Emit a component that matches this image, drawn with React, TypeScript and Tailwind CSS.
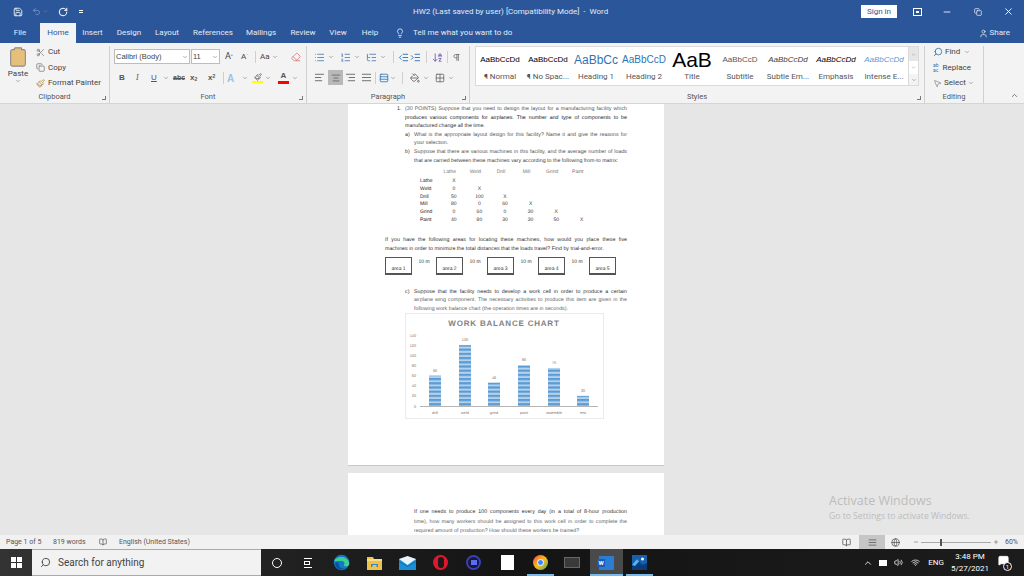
import {
  AlignCenter, AlignJustify, AlignLeft, AlignRight, ArrowDownAZ, BookOpen, ChevronDown, ChevronUp, Clipboard, Copy,
  Eraser, Globe, IndentDecrease, IndentIncrease, Lightbulb, List, ListOrdered, ListTree, Minus, MousePointer2,
  PaintBucket, Paintbrush, Pilcrow, Plus, RotateCw, Save, Scissors, Search, User, Volume2, Wifi, X, Grid2x2,
  MessageSquare, Undo2, Rows3,
} from 'lucide-react'
import type { ReactNode } from 'react'

const UI = { fontFamily: 'Roboto, "Open Sans", sans-serif' }
const DOC = { fontFamily: '"Liberation Sans", Arial, sans-serif' }

const TABS = [
  { label: 'File', w: 'w-[40px]' },
  { label: 'Home', w: 'w-[36px]', active: true },
  { label: 'Insert', w: 'w-[33px]' },
  { label: 'Design', w: 'w-[40px]' },
  { label: 'Layout', w: 'w-[36px]' },
  { label: 'References', w: 'w-[56px]' },
  { label: 'Mailings', w: 'w-[40px]' },
  { label: 'Review', w: 'w-[44px]' },
  { label: 'View', w: 'w-[26px]' },
  { label: 'Help', w: 'w-[38px]' },
]

const STYLES = [
  { sample: 'AaBbCcDd', label: '¶ Normal', cls: 'text-[8px] text-black' },
  { sample: 'AaBbCcDd', label: '¶ No Spac...', cls: 'text-[8px] text-black' },
  { sample: 'AaBbCc', label: 'Heading 1', cls: 'text-[12px] text-[#2e74b5]' },
  { sample: 'AaBbCcD', label: 'Heading 2', cls: 'text-[10px] text-[#2e74b5]' },
  { sample: 'AaB', label: 'Title', cls: 'text-[21px] text-black' },
  { sample: 'AaBbCcD', label: 'Subtitle', cls: 'text-[8px] text-[#595959]' },
  { sample: 'AaBbCcDd', label: 'Subtle Em...', cls: 'text-[8px] italic text-[#404040]' },
  { sample: 'AaBbCcDd', label: 'Emphasis', cls: 'text-[8px] italic text-black' },
  { sample: 'AaBbCcDd', label: 'Intense E...', cls: 'text-[8px] italic text-[#5b9bd5]' },
]

const MATRIX = [
  { name: 'Lathe', vals: ['X', '', '', '', '', ''] },
  { name: 'Weld', vals: ['0', 'X', '', '', '', ''] },
  { name: 'Drill', vals: ['50', '100', 'X', '', '', ''] },
  { name: 'Mill', vals: ['80', '0', '60', 'X', '', ''] },
  { name: 'Grind', vals: ['0', '60', '0', '30', 'X', ''] },
  { name: 'Paint', vals: ['40', '80', '30', '30', '50', 'X'] },
]

const BARS = [
  { label: 'drill', v: 60, x: 429 },
  { label: 'weld', v: 120, x: 459 },
  { label: 'grind', v: 46, x: 488 },
  { label: 'paint', v: 80, x: 518 },
  { label: 'assemble', v: 75, x: 548 },
  { label: 'test', v: 20, x: 577 },
]

function GroupLabel({ children }: { children: ReactNode }) {
  return (
    <div className="relative h-[11px] text-center text-[7.5px] leading-[10px] text-[#555]">
      {children}
    </div>
  )
}

function Launcher() {
  return <span className="absolute right-[3px] bottom-[3px] h-[4px] w-[4px] border-b border-r border-[#777]" />
}

function Group({ width, label, launcher, children }: { width: string; label: string; launcher?: boolean; children: ReactNode }) {
  return (
    <div className={`relative flex h-full shrink-0 flex-col border-r border-[#d0d0d0] ${width}`}>
      <div className="min-h-0 flex-1">{children}</div>
      <GroupLabel>{label}</GroupLabel>
      {launcher && <Launcher />}
    </div>
  )
}

function Caret() {
  return <ChevronDown size={6} strokeWidth={2} className="shrink-0 text-[#666]" />
}

function Chart() {
  const y = (v: number) => 406 - (v * 71) / 140
  return (
    <svg width="200" height="106" viewBox="405 313 200 106" className="ml-[57px] block" style={DOC}>
      <defs>
        <pattern id="bar" width="4" height="4.2" patternUnits="userSpaceOnUse">
          <rect width="4" height="4.2" fill="#b5d2ec" />
          <rect width="4" height="2.2" fill="#5b9bd5" />
        </pattern>
      </defs>
      <rect x="405.5" y="313.5" width="198" height="105" fill="#fff" stroke="#eaeaea" />
      <text x="504" y="326" textAnchor="middle" fontSize="8" fontWeight="700" letterSpacing="0.8" fill="#7f7f7f">WORK BALANCE CHART</text>
      {[0, 20, 40, 60, 80, 100, 120, 140].map((v) => (
        <text key={v} x="416" y={y(v) + 1.5} textAnchor="end" fontSize="3.8" fill="#777">{v}</text>
      ))}
      <line x1="420" x2="598" y1="406.5" y2="406.5" stroke="#b5b5b5" />
      {BARS.map((b) => (
        <g key={b.label}>
          <rect x={b.x} y={y(b.v)} width="12" height={406 - y(b.v)} fill="url(#bar)" />
          <text x={b.x + 6} y={y(b.v) - 4} textAnchor="middle" fontSize="3.8" fill="#777">{b.v}</text>
          <text x={b.x + 6} y="413.5" textAnchor="middle" fontSize="3.8" fill="#777">{b.label}</text>
        </g>
      ))}
    </svg>
  )
}

function AreaBox({ label }: { label: string }) {
  return (
    <div className="flex h-[18px] w-[27px] shrink-0 items-end justify-center border border-b-2 border-[#555] text-[5px] leading-[7px] text-[#333]">
      {label}
    </div>
  )
}

function Distance() {
  return <div className="flex h-[18px] w-[24px] shrink-0 justify-center pt-[2px] text-[5px] text-[#333]">10 m</div>
}

function Page1() {
  return (
    <div className="h-[362px] w-[316px] shrink-0 overflow-hidden border-b border-[#c8c8c8] bg-white text-[#333] [text-rendering:geometricPrecision]" style={DOC}>
      <div className="pl-[49px] pr-[37px] pt-[1px] text-[5.3px] leading-[8.6px]">
        <div className="flex">
          <span className="w-[8px] shrink-0">1.</span>
          <span className="flex-1 whitespace-nowrap text-[#555] [text-align-last:justify]">(30 POINTS) Suppose that you need to design the layout for a manufacturing facility which</span>
        </div>
        <div className="pl-[8px] text-[#222] [text-align-last:justify]">produces various components for airplanes. The number and type of components to be</div>
        <div className="pl-[8px]">manufactured change all the time.</div>
        <div className="flex pl-[8px]">
          <span className="w-[9px] shrink-0">a)</span>
          <span className="flex-1 whitespace-nowrap text-[#555] [text-align-last:justify]">What is the appropriate layout design for this facility? Name it and give the reasons for</span>
        </div>
        <div className="pl-[17px] text-[#555]">your selection.</div>
        <div className="flex pl-[8px]">
          <span className="w-[9px] shrink-0">b)</span>
          <span className="flex-1 whitespace-nowrap text-[#555] [text-align-last:justify]">Suppose that there are various machines in this facility, and the average number of loads</span>
        </div>
        <div className="whitespace-nowrap pl-[17px] text-[#444]">that are carried between these machines vary according to the following from-to matrix:</div>
      </div>

      <div className="ml-[72px] mt-[4px] text-[5px] leading-[7.8px]">
        <div className="mb-[1px] flex text-[#777]">
          <span className="w-[21px] shrink-0" />
          {['Lathe', 'Weld', 'Drill', 'Mill', 'Grind', 'Paint'].map((h) => (
            <span key={h} className="w-[25.6px] shrink-0 pr-[8px] text-center">{h}</span>
          ))}
        </div>
        {MATRIX.map((r) => (
          <div key={r.name} className="flex">
            <span className="w-[21px] shrink-0 text-[#222]">{r.name}</span>
            {r.vals.map((v, i) => (
              <span key={i} className="w-[25.6px] shrink-0 text-center">{v}</span>
            ))}
          </div>
        ))}
      </div>

      <div className="ml-[37px] mr-[37px] mt-[11px] text-[5.3px] leading-[9px]">
        <div className="whitespace-nowrap [text-align-last:justify]">If you have the following areas for locating these machines, how would you place these five</div>
        <div className="whitespace-nowrap">machines in order to minimize the total distances that the loads travel? Find by trial-and-error.</div>
      </div>

      <div className="ml-[37px] mt-[3px] flex">
        <AreaBox label="area 1" />
        <Distance />
        <AreaBox label="area 2" />
        <Distance />
        <AreaBox label="area 3" />
        <Distance />
        <AreaBox label="area 4" />
        <Distance />
        <AreaBox label="area 5" />
      </div>

      <div className="mt-[13px] pl-[57px] pr-[37px] text-[5.3px] leading-[8.5px]">
        <div className="flex">
          <span className="w-[9px] shrink-0">c)</span>
          <span className="flex-1 whitespace-nowrap [text-align-last:justify]">Suppose that the facility needs to develop a work cell in order to produce a certain</span>
        </div>
        <div className="whitespace-nowrap pl-[9px] text-[#666] [text-align-last:justify]">airplane wing component. The necessary activities to produce this item are given in the</div>
        <div className="whitespace-nowrap pl-[9px] text-[#666]">following work balance chart (the operation times are in seconds).</div>
      </div>
      <Chart />
    </div>
  )
}

function Page2() {
  return (
    <div className="mt-[7px] h-[200px] w-[316px] shrink-0 bg-white pl-[66px] pr-[37px] pt-[35px] text-[5.3px] leading-[9.6px] text-[#333] [text-rendering:geometricPrecision]" style={DOC}>
      <div className="whitespace-nowrap [text-align-last:justify]">If one needs to produce 100 components every day (in a total of 8-hour production</div>
      <div className="whitespace-nowrap text-[#666] [text-align-last:justify]">time), how many workers should be assigned to this work cell in order to complete the</div>
      <div className="whitespace-nowrap text-[#666]">required amount of production? How should these workers be trained?</div>
    </div>
  )
}

function EdgeIcon() {
  return (
    <svg width="17" height="17" viewBox="0 0 24 24" className="shrink-0">
      <circle cx="12" cy="12" r="11" fill="#0f78c9" />
      <path d="M2 10C4 3 20 1 23 13c.5 5-6 6-8 3 2-1 2-6-3-6-5-1-8 1-10 0Z" fill="#3ecf8e" />
      <path d="M8 14c0 5 5 8 10 6-6 4-14 1-15-6 1-3 5-3 5 0Z" fill="#0b4f9e" />
    </svg>
  )
}

function FolderIcon() {
  return (
    <svg width="15" height="14" viewBox="0 0 15 14" className="shrink-0">
      <path d="M0 1h6l1 2h8v11H0Z" fill="#efc14b" />
      <rect x="0" y="3" width="15" height="2" fill="#f7dc8b" />
      <rect x="4" y="8" width="7" height="3" fill="#2b8ad6" />
      <rect x="5.5" y="9" width="4" height="2" fill="#efc14b" />
    </svg>
  )
}

function MailIcon() {
  return (
    <svg width="17" height="14" viewBox="0 0 17 14" className="shrink-0">
      <rect y="3" width="17" height="11" fill="#1b8fd6" />
      <path d="M0 3 8.5 0 17 3 8.5 9Z" fill="#e8f4fc" />
      <path d="M0 5l8.5 5L17 5v1l-8.5 5L0 6Z" fill="#0e6fb0" />
    </svg>
  )
}

function PhotosIcon() {
  return (
    <svg width="15" height="15" viewBox="0 0 15 15" className="shrink-0">
      <rect width="15" height="15" fill="#1760ad" />
      <circle cx="10.5" cy="4" r="1.5" fill="#fff" />
      <path d="M0 10 5 4l5 6 5-2v7H0Z" fill="#0b3c7a" />
      <path d="M0 10 5 4l2 2.5L3 11Z" fill="#5ab2ee" />
    </svg>
  )
}

export default function App() {
  return (
    <div className="flex h-[576px] w-[1024px] flex-col overflow-hidden bg-[#e6e6e6]" style={UI}>
      {/* Title bar */}
      <div className="flex h-[23px] shrink-0 items-center bg-[#2b579a] text-white">
        <div className="flex w-[413px] shrink-0 items-center pl-[13px]">
          <Save size={10} strokeWidth={2} />
          <Undo2 size={9} className="ml-[9px] text-[#7f9bc6]" />
          <ChevronDown size={5} className="ml-[2px] text-[#7f9bc6]" />
          <RotateCw size={10} strokeWidth={2.4} className="ml-[10px]" />
          <span className="ml-[11px] h-[3px] w-[4px] border-y border-white" />
        </div>
        <div className="w-[448px] text-[8px] whitespace-pre text-[#e4eaf4]">HW2 (Last saved by user) [Compatibility Mode]  -  Word</div>
        <div className="flex h-[13px] w-[36px] shrink-0 items-center justify-center bg-white text-[8px] text-[#2b579a]">Sign in</div>
        <div className="ml-[16px] flex h-[8px] w-[9px] items-center justify-center border border-white">
          <span className="h-[2px] w-[3px] bg-white" />
        </div>
        <Minus size={10} className="ml-[20px]" />
        <Copy size={8} className="ml-[22px]" />
        <X size={11} className="ml-[21px]" />
      </div>

      {/* Tabs */}
      <div className="flex h-[20px] shrink-0 items-end bg-[#2b579a] text-[8px] text-[#e4eaf4]">
        {TABS.map((t) => (
          <div
            key={t.label}
            className={`flex h-[20px] shrink-0 items-center justify-center ${t.w} ${t.active ? 'bg-[#f3f3f3] text-[#2b579a]' : ''}`}
          >
            {t.label}
          </div>
        ))}
        <Lightbulb size={10} className="ml-[6px] shrink-0 self-center" />
        <span className="ml-[8px] self-center whitespace-nowrap text-[8px]">Tell me what you want to do</span>
        <div className="ml-auto mr-[14px] flex items-center gap-[2px] self-center text-[8px]">
          <User size={9} />
          Share
        </div>
      </div>

      {/* Ribbon */}
      <div className="flex h-[61px] shrink-0 border-b border-[#d5d5d5] bg-[#f3f3f3] pt-[3px] text-[#444]">
        <Group width="w-[110px]" label="Clipboard" launcher>
          <div className="flex">
            <div className="flex w-[36px] flex-col items-center">
              <Clipboard size={22} fill="#e6c07b" stroke="#8a8a8a" strokeWidth={1.2} />
              <span className="mt-[1px] text-[8px] leading-[9px]">Paste</span>
              <Caret />
            </div>
            <div className="flex flex-col gap-[5.5px] pt-[1px] text-[8px] leading-[10px]">
              <div className="flex items-center gap-[3px]"><Scissors size={9} className="text-[#777]" />Cut</div>
              <div className="flex items-center gap-[3px]"><Copy size={9} className="text-[#777]" />Copy</div>
              <div className="flex items-center gap-[3px]"><Paintbrush size={9} className="text-[#b08a3c]" />Format Painter</div>
            </div>
          </div>
        </Group>

        <Group width="w-[197px]" label="Font" launcher>
          <div className="pl-[4px] pt-[3px]">
            <div className="flex h-[15px] items-center">
              <div className="flex h-[15px] w-[76px] items-center justify-between border border-[#bdbdbd] bg-white pl-[1px] pr-[1px] text-[7.5px]" style={DOC}>
                Calibri (Body)<Caret />
              </div>
              <div className="ml-[1px] flex h-[15px] w-[29px] items-center justify-between border border-[#bdbdbd] bg-white pl-[1px] pr-[1px] text-[7.5px]" style={DOC}>
                11<Caret />
              </div>
              <span className="ml-[5px] w-[14px] text-[9px]">A<sup className="text-[4px]">^</sup></span>
              <span className="ml-[2px] w-[11px] text-[8px]">A<sup className="text-[4px]">ˇ</sup></span>
              <span className="mx-[3px] h-[12px] w-px bg-[#cfcfcf]" />
              <span className="ml-[1px] text-[8px]">Aa</span>
              <span className="ml-[2px]"><Caret /></span>
              <Eraser size={10} className="ml-[13px] text-[#e0787c]" />
            </div>
            <div className="mt-[7px] flex h-[14px] items-center text-[8px] text-[#555]" style={DOC}>
              <b className="ml-[5px] w-[17px]">B</b>
              <i className="w-[15px] font-serif">I</i>
              <u className="w-[12px]">U</u>
              <Caret />
              <s className="ml-[4px] w-[17px] text-[7px] font-bold">abc</s>
              <span className="w-[18px] font-bold">x<sub className="text-[5px]">2</sub></span>
              <span className="w-[12px] font-bold">x<sup className="text-[5px]">2</sup></span>
              <span className="mx-[3px] h-[12px] w-px bg-[#cfcfcf]" />
              <span className="w-[15px] text-[10px] font-bold text-[#9dc3e6]">A</span>
              <Caret />
              <span className="ml-[4px] flex w-[11px] flex-col items-center">
                <Paintbrush size={8} />
                <span className="h-[2.5px] w-[11px] bg-[#ffff00]" />
              </span>
              <span className="ml-[2px]"><Caret /></span>
              <span className="ml-[7px] flex w-[11px] flex-col items-center font-bold leading-[8px]">
                A
                <span className="mt-[1px] h-[2.5px] w-[11px] bg-[#ff0000]" />
              </span>
              <span className="ml-[3px]"><Caret /></span>
            </div>
          </div>
        </Group>

        <Group width="w-[163px]" label="Paragraph" launcher>
          <div className="pl-[7px] pt-[4px] text-[#666]">
            <div className="flex h-[14px] items-center">
              <List size={11} className="text-[#5a86b8]" /><span className="ml-[3px] mr-[6px]"><Caret /></span>
              <ListOrdered size={11} className="text-[#5a86b8]" /><span className="ml-[3px] mr-[6px]"><Caret /></span>
              <ListTree size={11} className="text-[#5a86b8]" /><span className="ml-[3px] mr-[3px]"><Caret /></span>
              <span className="mx-[4px] h-[12px] w-px bg-[#cfcfcf]" />
              <IndentDecrease size={11} className="text-[#2e74b5]" />
              <IndentIncrease size={11} className="ml-[1px] text-[#2e74b5]" />
              <span className="mx-[5px] h-[12px] w-px bg-[#cfcfcf]" />
              <ArrowDownAZ size={11} className="text-[#7a5fb5]" />
              <span className="mx-[4px] h-[12px] w-px bg-[#cfcfcf]" />
              <Pilcrow size={9} />
            </div>
            <div className="mt-[6px] flex h-[15px] items-center">
              <AlignLeft size={11} />
              <span className="ml-[3px] flex h-[15px] w-[15px] items-center justify-center bg-[#b9b9b9]"><AlignCenter size={10} /></span>
              <AlignRight size={11} className="ml-[2px]" />
              <AlignJustify size={11} className="ml-[5px]" />
              <span className="mx-[3px] h-[12px] w-px bg-[#cfcfcf]" />
              <Rows3 size={10} className="text-[#2e74b5]" /><span className="ml-[1px] mr-[6px]"><Caret /></span>
              <span className="mr-[7px] h-[12px] w-px bg-[#cfcfcf]" />
              <PaintBucket size={10} /><span className="ml-[3px] mr-[6px]"><Caret /></span>
              <Grid2x2 size={10} /><span className="ml-[3px]"><Caret /></span>
            </div>
          </div>
        </Group>

        <Group width="w-[455px]" label="Styles" launcher>
          <div className="ml-[5px] flex h-[40px] w-[444px] border border-[#dadada] bg-white">
            {STYLES.map((s) => (
              <div key={s.label} className="flex w-[48px] shrink-0 flex-col items-center overflow-hidden">
                <div className={`flex h-[25px] items-center whitespace-nowrap ${s.cls}`} style={DOC}>{s.sample}</div>
                <div className="text-[8px] leading-[10px] whitespace-nowrap text-[#555]">{s.label}</div>
              </div>
            ))}
            <div className="ml-auto flex w-[10px] flex-col border-l border-[#dadada] bg-[#f3f3f3] text-[#777]">
              <div className="flex h-[14px] items-center justify-center bg-[#e6e6e6]"><ChevronUp size={5} /></div>
              <div className="flex h-[13px] items-center justify-center bg-white"><ChevronDown size={5} /></div>
              <div className="flex flex-1 items-center justify-center"><ChevronDown size={6} /></div>
            </div>
          </div>
        </Group>

        <div className="flex h-full w-[59px] shrink-0 flex-col border-r border-[#d0d0d0]">
          <div className="flex min-h-0 flex-1 flex-col gap-[5.5px] pl-[8px] pt-[1px] text-[8px] leading-[10px]">
            <div className="flex items-center gap-[2px]"><Search size={10} className="-scale-x-100 text-[#2e74b5]" />Find<span className="ml-[2px]"><Caret /></span></div>
            <div className="flex items-center gap-[2px]"><span className="text-[5px] leading-[5px] text-[#2e74b5]">ab<br />ac</span>&nbsp;Replace</div>
            <div className="flex items-center gap-[2px]"><MousePointer2 size={9} className="text-[#888]" />Select<Caret /></div>
          </div>
          <GroupLabel>Editing</GroupLabel>
        </div>
        <div className="ml-auto flex items-end pb-[3px] pr-[5px]"><ChevronUp size={9} className="text-[#555]" /></div>
      </div>

      {/* Document */}
      <div className="relative flex min-h-0 flex-1 flex-col overflow-hidden bg-[#e6e6e6] pl-[348px]">
        <Page1 />
        <Page2 />
        <div className="absolute left-[829px] top-[388px] text-[#bcbcbc]" style={{ fontFamily: '"Open Sans", sans-serif' }}>
          <div className="text-[12.5px] leading-[17px]">Activate Windows</div>
          <div className="mt-[1px] text-[8.6px] leading-[12px]">Go to Settings to activate Windows.</div>
        </div>
      </div>

      {/* Status bar */}
      <div className="flex h-[14px] shrink-0 items-center bg-[#f1f1f1] text-[7px] text-[#555]">
        <span className="ml-[6px] w-[47px]">Page 1 of 5</span>
        <span className="w-[46px]">819 words</span>
        <BookOpen size={8} />
        <span className="ml-[12px]">English (United States)</span>
        <BookOpen size={9} className="ml-auto" />
        <span className="ml-[8px] flex h-[14px] w-[26px] items-center justify-center bg-[#c6c6c6]"><AlignJustify size={9} /></span>
        <Globe size={9} className="ml-[6px]" />
        <Minus size={6} className="ml-[13px]" />
        <div className="relative ml-[2px] h-px w-[70px] bg-[#aaa]">
          <span className="absolute left-[19px] top-[-3px] h-[7px] w-[2px] bg-[#555]" />
        </div>
        <Plus size={6} className="ml-[2px]" />
        <span className="ml-[6px] mr-[6px]">60%</span>
      </div>

      {/* Taskbar */}
      <div className="flex h-[27px] shrink-0 items-center bg-gradient-to-r from-[#333] via-[#141414] to-[#1c1c1c] text-white">
        <div className="flex h-full w-[32px] shrink-0 items-center justify-center">
          <div className="grid grid-cols-2 gap-px">
            <span className="h-[5px] w-[5px] bg-white" /><span className="h-[5px] w-[5px] bg-white" />
            <span className="h-[5px] w-[5px] bg-white" /><span className="h-[5px] w-[5px] bg-white" />
          </div>
        </div>
        <div className="flex h-full w-[229px] shrink-0 items-center border-y border-[#aaa] bg-[#f2f2f2] pl-[8px] text-[10px] text-[#444]">
          <Search size={11} className="-scale-x-100" />
          <span className="ml-[7px]">Search for anything</span>
        </div>
        <span className="ml-[11px] h-[10px] w-[10px] shrink-0 rounded-full border-[1.5px] border-white" />
        <div className="ml-[22px] flex h-[10px] w-[8px] shrink-0 flex-col justify-between border-y border-white">
          <span className="mt-[2px] h-[4px] w-[6px] border border-white" />
        </div>
        <div className="ml-[21px]"><EdgeIcon /></div>
        <div className="ml-[17px]"><FolderIcon /></div>
        <div className="ml-[17px]"><MailIcon /></div>
        <div className="ml-[17px] flex h-[15px] w-[15px] shrink-0 items-center justify-center rounded-full bg-[#e0182d]"><span className="h-[11px] w-[6px] rounded-full bg-[#1a1a1a]" /></div>
        <div className="ml-[18px] flex h-[15px] w-[15px] shrink-0 items-center justify-center rounded-full border-2 border-[#3a3fb5] bg-[#17173a]"><span className="h-[5px] w-[6px] bg-[#5a6cf0]" /></div>
        <div className="ml-[20px] h-[15px] w-[13px] shrink-0 bg-white" />
        <div className="relative ml-[13px] flex h-full w-[27px] shrink-0 items-center justify-center">
          <div className="h-[15px] w-[15px] rounded-full bg-gradient-to-br from-[#ea4335] via-[#fbbc05] to-[#34a853] p-[4px]"><div className="h-full w-full rounded-full border border-white bg-[#4285f4]" /></div>
          <span className="absolute inset-x-0 bottom-0 h-[2px] bg-[#76b9ed]" />
        </div>
        <div className="ml-[10px] h-[11px] w-[16px] shrink-0 border border-[#666] bg-[#3a3a3a]" />
        <div className="relative ml-[10px] flex h-full w-[33px] shrink-0 items-center justify-center bg-[#4a4a4a]">
          <div className="relative flex h-[14px] w-[15px] justify-end bg-[#2b7cd3]">
            <span className="absolute left-[-2px] top-[3px] flex h-[8px] w-[8px] items-center justify-center bg-[#185abd] text-[6px] font-bold">W</span>
          </div>
          <span className="absolute inset-x-0 bottom-0 h-[2px] bg-[#76b9ed]" />
        </div>
        <div className="relative ml-[3px] flex h-full w-[27px] shrink-0 items-center justify-center">
          <PhotosIcon />
          <span className="absolute inset-x-0 bottom-0 h-[2px] bg-[#76b9ed]" />
        </div>
        <div className="ml-auto flex items-center">
          <ChevronUp size={10} />
          <span className="ml-[6px] h-[6px] w-[8px] bg-white" />
          <Volume2 size={9} className="ml-[7px]" />
          <Wifi size={9} className="ml-[8px]" />
          <span className="ml-[8px] text-[8px]">ENG</span>
          <div className="ml-[7px] flex w-[38px] flex-col items-center text-[8px] leading-[12px]">
            <span>3:48 PM</span>
            <span>5/27/2021</span>
          </div>
          <div className="relative ml-[9px] mr-[12px] h-[16px] w-[14px]">
            <MessageSquare size={11} fill="#fff" />
            <span className="absolute bottom-0 right-0 flex h-[9px] w-[9px] items-center justify-center rounded-full border border-white bg-[#1a1a1a] text-[6px]">1</span>
          </div>
        </div>
      </div>
    </div>
  )
}
